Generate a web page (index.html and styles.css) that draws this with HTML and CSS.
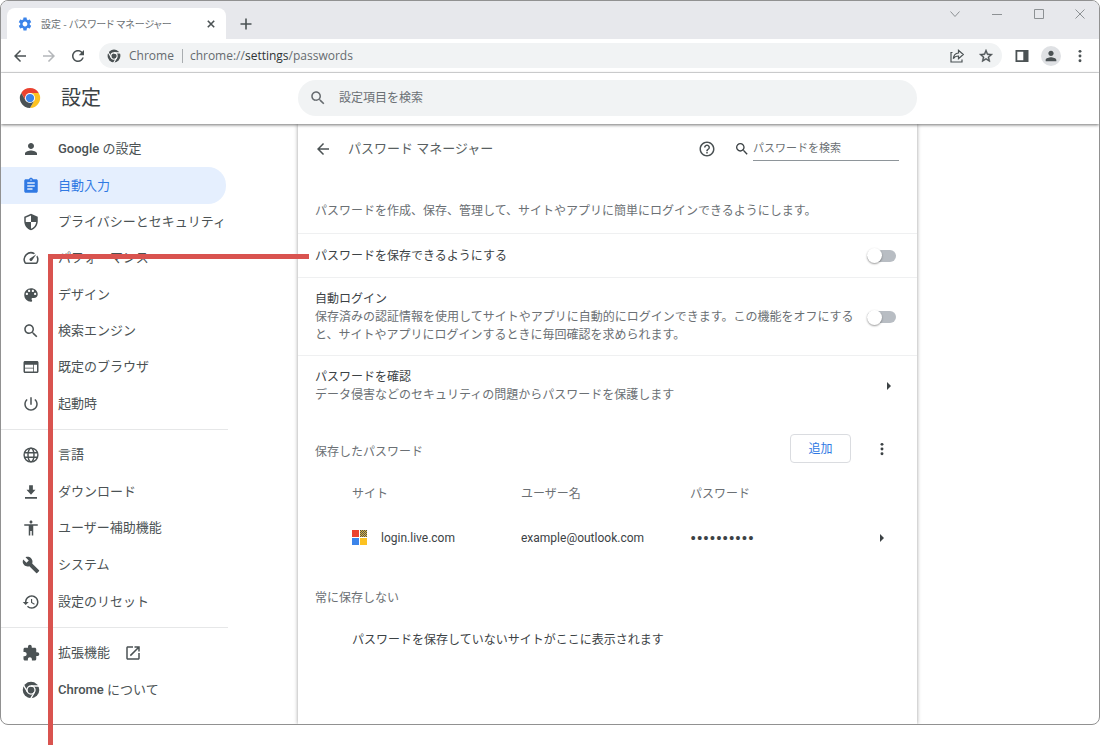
FILE: index.html
```html
<!DOCTYPE html>
<html lang="ja">
<head>
<meta charset="utf-8">
<title>設定 - パスワード マネージャー</title>
<link rel="stylesheet" href="styles.css">
</head>
<body>
<svg class="defs" aria-hidden="true">
  <symbol id="i-back" viewBox="0 0 24 24"><path d="M20 11H7.83l5.59-5.59L12 4l-8 8 8 8 1.41-1.41L7.83 13H20v-2z"/></symbol>
  <symbol id="i-search" viewBox="0 0 24 24"><path d="M15.5 14h-.79l-.28-.27C15.41 12.59 16 11.11 16 9.5 16 5.91 13.09 3 9.5 3S3 5.91 3 9.5 5.91 16 9.5 16c1.61 0 3.09-.59 4.23-1.57l.27.28v.79l5 4.99L20.49 19l-4.99-5zm-6 0C7.01 14 5 11.99 5 9.5S7.01 5 9.5 5 14 7.01 14 9.5 11.99 14 9.5 14z"/></symbol>
  <symbol id="i-person" viewBox="0 0 24 24"><path d="M12 12c2.21 0 4-1.79 4-4s-1.79-4-4-4-4 1.79-4 4 1.79 4 4 4zm0 2c-2.67 0-8 1.34-8 4v2h16v-2c0-2.66-5.33-4-8-4z"/></symbol>
  <symbol id="i-chrome" viewBox="0 0 24 24"><circle cx="12" cy="12" r="11"/><g fill="none" stroke="#fff" stroke-width="1.8"><circle cx="12" cy="12" r="5.4"/><path d="M12 6.6h11M16.7 14.7l-5.5 9.5M7.3 14.7L1.8 5.2"/></g></symbol>
  <symbol id="i-more" viewBox="0 0 24 24"><circle cx="12" cy="4" r="2.500"/><circle cx="12" cy="12" r="2.500"/><circle cx="12" cy="20" r="2.500"/></symbol>
</svg>

<div class="window">
  <div class="tabstrip">
    <div class="tab">
      <svg class="icon-16 blue" viewBox="0 0 24 24"><path d="M19.14 12.94c.04-.3.06-.61.06-.94 0-.32-.02-.64-.07-.94l2.03-1.58c.18-.14.23-.41.12-.61l-1.92-3.32c-.12-.22-.37-.29-.59-.22l-2.39.96c-.5-.38-1.03-.7-1.62-.94l-.36-2.54c-.04-.24-.24-.41-.48-.41h-3.84c-.24 0-.43.17-.47.41l-.36 2.54c-.59.24-1.13.57-1.62.94l-2.39-.96c-.22-.08-.47 0-.59.22L2.74 8.87c-.12.21-.08.47.12.61l2.03 1.58c-.05.3-.09.63-.09.94s.02.64.07.94l-2.03 1.58c-.18.14-.23.41-.12.61l1.92 3.32c.12.22.37.29.59.22l2.39-.96c.5.38 1.03.7 1.62.94l.36 2.54c.05.24.24.41.48.41h3.84c.24 0 .44-.17.47-.41l.36-2.54c.59-.24 1.13-.56 1.62-.94l2.39.96c.22.08.47 0 .59-.22l1.92-3.32c.12-.22.07-.47-.12-.61l-2.01-1.58zM12 15.6c-1.98 0-3.6-1.62-3.6-3.6s1.62-3.6 3.6-3.6 3.6 1.62 3.6 3.6-1.62 3.6-3.6 3.6z"/></svg>
      <span class="tab-title">設定 - パスワード マネージャー</span>
      <button class="tab-close" aria-label="タブを閉じる"><svg class="icon-8" viewBox="0 0 8 8"><path class="line" d="M.8.8l6.4 6.4M7.2.8L.8 7.2"/></svg></button>
    </div>
    <button class="new-tab" aria-label="新しいタブ"><svg class="icon-12" viewBox="0 0 12 12"><path class="line" d="M6 .5v11M.5 6h11"/></svg></button>
    <div class="win-controls">
      <button aria-label="タブを検索"><svg class="icon-12" viewBox="0 0 12 12"><path class="thin" d="M1.5 3.5L6 8.5l4.500-5"/></svg></button>
      <button aria-label="最小化"><svg class="icon-12" viewBox="0 0 12 12"><path class="thin" d="M1 6.500h10"/></svg></button>
      <button aria-label="最大化"><svg class="icon-12" viewBox="0 0 12 12"><path class="thin" d="M1.500 1.500h9v9h-9z"/></svg></button>
      <button aria-label="閉じる"><svg class="icon-12" viewBox="0 0 12 12"><path class="thin" d="M1.500 1.500l9 9M10.500 1.500l-9 9"/></svg></button>
    </div>
  </div>

  <div class="toolbar">
    <div class="nav-buttons">
      <button aria-label="戻る"><svg class="icon-18" viewBox="0 0 24 24"><use href="#i-back"/></svg></button>
      <button class="disabled" aria-label="進む" disabled><svg class="icon-18 flip" viewBox="0 0 24 24"><use href="#i-back"/></svg></button>
      <button aria-label="再読み込み"><svg class="icon-18" viewBox="0 0 24 24"><path d="M17.65 6.35C16.2 4.9 14.21 4 12 4c-4.42 0-7.99 3.58-7.99 8s3.57 8 7.99 8c3.73 0 6.84-2.55 7.73-6h-2.080c-.82 2.330-3.040 4-5.650 4-3.310 0-6-2.690-6-6s2.690-6 6-6c1.660 0 3.140.690 4.220 1.780L13 11h7V4l-2.350 2.350z"/></svg></button>
    </div>
    <div class="omnibox">
      <svg class="icon-14" viewBox="0 0 24 24"><use href="#i-chrome"/></svg>
      <span class="origin">Chrome</span>
      <span class="url">chrome://<b>settings</b>/passwords</span>
      <button aria-label="共有"><svg class="icon-16" viewBox="0 0 16 16"><path class="share" d="M3.500 4.500H2v9.500h11v-2.500M9.500 5V2.300L14.300 6.500 9.500 10.600V8C7.300 8 5.500 8.800 4.300 10.600 4.600 7.500 6.500 5.300 9.500 5z"/></svg></button>
      <button aria-label="ブックマーク"><svg class="icon-16" viewBox="0 0 24 24"><path stroke="currentColor" stroke-width=".6" d="M22 9.240l-7.190-.62L12 2 9.190 8.630 2 9.240l5.460 4.730L5.820 21 12 17.270 18.180 21l-1.630-7.030L22 9.240zM12 15.400l-3.760 2.270 1-4.280-3.320-2.880 4.380-.38L12 6.100l1.710 4.040 4.380.38-3.320 2.880 1 4.280L12 15.400z"/></svg></button>
    </div>
    <div class="tool-buttons">
      <button aria-label="サイドパネル"><svg class="icon-14" viewBox="0 0 14 14"><path fill-rule="evenodd" d="M.5 1h13v12h-13zM2.300 2.800v8.400h6V2.800z"/></svg></button>
      <button class="avatar" aria-label="プロフィール"><svg class="icon-16" viewBox="0 0 24 24"><use href="#i-person"/></svg></button>
      <button aria-label="メニュー"><svg class="icon-14" viewBox="0 0 24 24"><use href="#i-more"/></svg></button>
    </div>
  </div>

  <header class="page-header">
    <div class="brand">
      <svg class="icon-22" viewBox="0 0 24 24"><path fill="#ea4230" d="M2.470 6.500A11 11 0 0 1 21.530 6.500H12L7.240 14.750z"/><path fill="#fcc222" d="M21.530 6.500A11 11 0 0 1 12 23l4.760-8.250L12 6.500z"/><path fill="#4b5254" d="M12 23A11 11 0 0 1 2.470 6.500l4.770 8.250h9.520z"/><circle cx="12" cy="12" r="5.500" fill="#fff"/><circle cx="12" cy="12" r="4.500" fill="#3b84ea"/></svg>
      <h1>設定</h1>
    </div>
    <label class="search-pill">
      <svg class="icon-18" viewBox="0 0 24 24"><use href="#i-search"/></svg>
      <input type="search" placeholder="設定項目を検索" aria-label="設定項目を検索">
    </label>
  </header>

  <div class="content">
    <nav class="sidebar">
      <div class="group group-8">
        <a href="#"><svg class="icon-18" viewBox="0 0 24 24"><use href="#i-person"/></svg><span><b>Google</b> の設定</span></a>
        <a href="#" class="selected"><svg class="icon-18" viewBox="0 0 24 24"><path d="M19 3h-4.180C14.400 1.840 13.300 1 12 1c-1.300 0-2.400.840-2.820 2H5c-1.100 0-2 .9-2 2v14c0 1.100.9 2 2 2h14c1.100 0 2-.9 2-2V5c0-1.100-.9-2-2-2zm-7 0c.55 0 1 .45 1 1s-.45 1-1 1-1-.45-1-1 .45-1 1-1zm2 14H7v-2h7v2zm3-4H7v-2h10v2zm0-4H7V7h10v2z"/></svg><span>自動入力</span></a>
        <a href="#"><svg class="icon-18" viewBox="0 0 24 24"><path d="M12 1L3 5v6c0 5.550 3.840 10.740 9 12 5.160-1.260 9-6.450 9-12V5l-9-4zm0 10.990h7c-.53 4.120-3.280 7.790-7 8.940V12H5V6.300l7-3.110v8.800z"/></svg><span>プライバシーとセキュリティ</span></a>
        <a href="#"><svg class="icon-18" viewBox="0 0 24 24"><path d="M20.380 8.570l-1.230 1.850a8 8 0 0 1-.22 7.580H5.070A8 8 0 0 1 15.580 6.850l1.850-1.230A10 10 0 0 0 3.350 19a2 2 0 0 0 1.720 1h13.850a2 2 0 0 0 1.740-1 10 10 0 0 0-.27-10.440zm-9.790 6.840a2 2 0 0 0 2.830 0l5.660-8.490-8.490 5.660a2 2 0 0 0 0 2.830z"/></svg><span>パフォーマンス</span></a>
        <a href="#"><svg class="icon-18" viewBox="0 0 24 24"><path d="M12 3c-4.970 0-9 4.030-9 9s4.030 9 9 9c.83 0 1.500-.67 1.500-1.500 0-.39-.15-.74-.39-1.010-.23-.26-.38-.61-.38-.99 0-.83.67-1.500 1.500-1.500H16c2.760 0 5-2.240 5-5 0-4.420-4.030-8-9-8zm-5.500 9c-.83 0-1.500-.67-1.500-1.500S5.670 9 6.500 9 8 9.670 8 10.500 7.330 12 6.500 12zm3-4C8.670 8 8 7.330 8 6.500S8.670 5 9.500 5s1.500.67 1.500 1.500S10.330 8 9.500 8zm5 0c-.83 0-1.500-.67-1.500-1.500S13.670 5 14.500 5s1.500.67 1.500 1.500S15.330 8 14.500 8zm3 4c-.83 0-1.500-.67-1.500-1.500S16.670 9 17.500 9s1.500.67 1.500 1.500-.67 1.500-1.500 1.500z"/></svg><span>デザイン</span></a>
        <a href="#"><svg class="icon-18" viewBox="0 0 24 24"><use href="#i-search"/></svg><span>検索エンジン</span></a>
        <a href="#"><svg class="icon-18" viewBox="0 0 24 24"><path d="M20 4H4c-1.100 0-1.990.9-1.990 2L2 18c0 1.100.9 2 2 2h16c1.100 0 2-.9 2-2V6c0-1.100-.9-2-2-2zm-5 14H4v-4h11v4zm0-5H4V9h11v4zm5 5h-4V9h4v9z"/></svg><span>既定のブラウザ</span></a>
        <a href="#"><svg class="icon-18" viewBox="0 0 24 24"><path d="M13 3h-2v10h2V3zm4.830 2.170l-1.420 1.420C17.990 7.860 19 9.810 19 12c0 3.870-3.130 7-7 7s-7-3.130-7-7c0-2.190 1.010-4.140 2.580-5.420L6.170 5.170C4.230 6.820 3 9.260 3 12c0 4.970 4.030 9 9 9s9-4.030 9-9c0-2.740-1.230-5.180-3.170-6.830z"/></svg><span>起動時</span></a>
      </div>
      <hr>
      <div class="group group-5">
        <a href="#"><svg class="icon-18" viewBox="0 0 24 24"><g fill="none" stroke="currentColor" stroke-width="1.900"><circle cx="12" cy="12" r="9.200"/><ellipse cx="12" cy="12" rx="4" ry="9.200"/><path d="M3.500 9h17M3.500 15h17"/></g></svg><span>言語</span></a>
        <a href="#"><svg class="icon-18" viewBox="0 0 24 24"><path d="M18 9h-3.500V3h-5v6H6l6 6.500zM4 18.500V21h16v-2.500z"/></svg><span>ダウンロード</span></a>
        <a href="#"><svg class="icon-18" viewBox="0 0 24 24"><path d="M12 2c1.100 0 2 .9 2 2s-.9 2-2 2-2-.9-2-2 .9-2 2-2zm9 7h-6v13h-2v-6h-2v6H9V9H3V7h18v2z"/></svg><span>ユーザー補助機能</span></a>
        <a href="#"><svg class="icon-18" viewBox="0 0 24 24"><path d="M22.700 19l-9.100-9.100c.9-2.300.4-5-1.500-6.900-2-2-5-2.400-7.400-1.300L9 6 6 9 1.600 4.700C.4 7.100.9 10.100 2.900 12.100c1.900 1.900 4.600 2.400 6.900 1.500l9.100 9.100c.4.4 1 .4 1.400 0l2.300-2.300c.5-.4.5-1.100.1-1.400z"/></svg><span>システム</span></a>
        <a href="#"><svg class="icon-18" viewBox="0 0 24 24"><path d="M13 3c-4.970 0-9 4.030-9 9H1l3.890 3.890.07.14L9 12H6c0-3.870 3.130-7 7-7s7 3.130 7 7-3.130 7-7 7c-1.930 0-3.680-.79-4.940-2.060l-1.420 1.420C8.270 19.990 10.510 21 13 21c4.970 0 9-4.030 9-9s-4.030-9-9-9zm-1 5v5l4.280 2.540.72-1.210-3.500-2.080V8H12z"/></svg><span>設定のリセット</span></a>
      </div>
      <hr>
      <div class="group group-2">
        <a href="#"><svg class="icon-18" viewBox="0 0 24 24"><path d="M20.500 11H19V7c0-1.100-.9-2-2-2h-4V3.500C13 2.120 11.880 1 10.500 1S8 2.120 8 3.500V5H4c-1.100 0-1.990.9-1.990 2v3.800H3.500c1.490 0 2.700 1.210 2.700 2.700s-1.210 2.700-2.700 2.700H2V20c0 1.100.9 2 2 2h3.800v-1.500c0-1.490 1.210-2.700 2.700-2.700 1.490 0 2.700 1.210 2.700 2.700V22H17c1.100 0 2-.9 2-2v-4h1.500c1.380 0 2.500-1.120 2.500-2.500S21.880 11 20.500 11z"/></svg><span>拡張機能</span><svg class="icon-18 external" viewBox="0 0 24 24"><path d="M19 19H5V5h7V3H5c-1.110 0-2 .9-2 2v14c0 1.100.89 2 2 2h14c1.100 0 2-.9 2-2v-7h-2v7zM14 3v2h3.590l-9.830 9.830 1.410 1.410L19 6.410V10h2V3h-7z"/></svg></a>
        <a href="#"><svg class="icon-18" viewBox="0 0 24 24"><use href="#i-chrome"/></svg><span><b>Chrome</b> について</span></a>
      </div>
    </nav>

    <main class="card">
      <div class="card-head">
        <button aria-label="戻る"><svg class="icon-18" viewBox="0 0 24 24"><use href="#i-back"/></svg></button>
        <h2>パスワード マネージャー</h2>
        <button aria-label="ヘルプ"><svg class="icon-18" viewBox="0 0 24 24"><path d="M11 18h2v-2h-2v2zm1-16C6.480 2 2 6.480 2 12s4.480 10 10 10 10-4.480 10-10S17.520 2 12 2zm0 18c-4.410 0-8-3.590-8-8s3.590-8 8-8 8 3.590 8 8-3.590 8-8 8zm0-14c-2.210 0-4 1.790-4 4h2c0-1.100.9-2 2-2s2 .9 2 2c0 2-3 1.750-3 5h2c0-2.250 3-2.500 3-5 0-2.210-1.790-4-4-4z"/></svg></button>
        <label class="find">
          <svg class="icon-16" viewBox="0 0 24 24"><use href="#i-search"/></svg>
          <input type="search" placeholder="パスワードを検索" aria-label="パスワードを検索">
        </label>
      </div>
      <p class="intro">パスワードを作成、保存、管理して、サイトやアプリに簡単にログインできるようにします。</p>

      <div class="row">
        <label class="row-text" for="save-toggle"><span class="row-title">パスワードを保存できるようにする</span></label>
        <input class="toggle" type="checkbox" id="save-toggle">
      </div>
      <div class="row tall">
        <label class="row-text" for="login-toggle"><span class="row-title">自動ログイン</span><span class="row-sub">保存済みの認証情報を使用してサイトやアプリに自動的にログインできます。この機能をオフにすると、サイトやアプリにログインするときに毎回確認を求められます。</span></label>
        <input class="toggle" type="checkbox" id="login-toggle">
      </div>
      <div class="row tall">
        <div class="row-text"><span class="row-title">パスワードを確認</span><span class="row-sub">データ侵害などのセキュリティの問題からパスワードを保護します</span></div>
        <button class="arrow" aria-label="パスワードを確認"><svg class="icon-8" viewBox="0 0 8 8"><path d="M2 0l4 4-4 4z"/></svg></button>
      </div>

      <div class="section-head">
        <h3>保存したパスワード</h3>
        <button class="add">追加</button>
        <button class="more" aria-label="その他の操作"><svg class="icon-14" viewBox="0 0 24 24"><use href="#i-more"/></svg></button>
      </div>
      <table class="passwords">
        <thead>
          <tr><th>サイト</th><th>ユーザー名</th><th>パスワード</th><td></td></tr>
        </thead>
        <tbody>
          <tr>
            <td><span class="site"><svg class="icon-16" viewBox="0 0 16 16"><defs><pattern id="mesh" width="2" height="2" patternUnits="userSpaceOnUse"><path fill="#e2b53a" d="M0 0h2v2H0z"/><path fill="#4b5254" d="M0 0h1v1H0zM1 1h1v1H1z"/></pattern></defs><path fill="#ea4230" d="M0 0h7v7H0z"/><path fill="url(#mesh)" d="M8 0h7v7H8z"/><path fill="#3b84ea" d="M0 8h7v7H0z"/><path fill="#fcc222" d="M8 8h7v7H8z"/></svg>login.live.com</span></td>
            <td>example@outlook.com</td>
            <td><input class="secret" type="password" value="0000000000" readonly aria-label="パスワード"></td>
            <td><button class="arrow" aria-label="パスワードの詳細"><svg class="icon-8" viewBox="0 0 8 8"><path d="M2 0l4 4-4 4z"/></svg></button></td>
          </tr>
        </tbody>
      </table>

      <h3 class="never">常に保存しない</h3>
      <p class="empty">パスワードを保存していないサイトがここに表示されます</p>
    </main>
  </div>
</div>
<div class="callout" aria-hidden="true"></div>
</body>
</html>
```

FILE: styles.css
```css
* {
  box-sizing: border-box;
}

body {
  position: relative;
  min-height: 100vh;
  margin: 0;
  padding-bottom: 20px;
  background: #fff;
  color: #3c4245;
  font-family: Roboto, "Noto Sans CJK JP", sans-serif;
  font-size: 12px;
  line-height: 18px;
}

h1,
h2,
h3,
p {
  margin: 0;
  font-weight: 400;
}

h3 {
  font-size: 12px;
}

button {
  display: flex;
  align-items: center;
  justify-content: center;
  padding: 0;
  border: 0;
  background: none;
  color: inherit;
  font: inherit;
}

input {
  min-width: 0;
  margin: 0;
  padding: 0;
  border: 0;
  outline: 0;
  background: none;
  color: inherit;
  font: inherit;
}

input::placeholder {
  color: #6b7074;
  opacity: 1;
}

svg {
  flex: none;
  display: block;
  fill: currentColor;
}

.defs {
  position: absolute;
  width: 0;
  height: 0;
}

.icon-8 { width: 8px; height: 8px; }
.icon-12 { width: 12px; height: 12px; }
.icon-14 { width: 14px; height: 14px; }
.icon-16 { width: 16px; height: 16px; }
.icon-18 { width: 18px; height: 18px; }
.icon-22 { width: 22px; height: 22px; }

.blue { color: #3b84ea; }
.flip { transform: scaleX(-1); }

.line,
.thin,
.share {
  fill: none;
  stroke: currentColor;
}

.line { stroke-width: 1.6; }
.thin { stroke-width: 1; }
.share { stroke-width: 1.2; }

/* Window frame */

.window {
  display: flex;
  flex-direction: column;
  min-height: calc(100vh - 20px);
  border: 1px solid #919191;
  border-radius: 8px;
  overflow: hidden;
}

.tabstrip {
  display: flex;
  align-items: flex-start;
  height: 38px;
  padding-left: 6px;
  background: #e7e8ec;
}

.tab {
  display: flex;
  align-items: center;
  gap: 8px;
  width: 219px;
  height: 31px;
  margin-top: 7px;
  padding: 0 9px 0 10px;
  border-radius: 8px 8px 0 0;
  background: #fff;
}

.tab-title {
  flex: 1;
  color: #6b7074;
  font-family: "Noto Sans CJK JP", sans-serif;
  font-size: 10px;
  font-feature-settings: "palt";
  white-space: nowrap;
}

.tab-close {
  width: 12px;
  height: 16px;
  color: #4b5254;
}

.new-tab {
  width: 24px;
  height: 24px;
  margin: 11px 0 0 8px;
  color: #4b5254;
}

.win-controls {
  display: flex;
  margin-left: auto;
  color: #8d9194;
}

.win-controls button {
  width: 42px;
  height: 26px;
}

.win-controls button:last-child {
  width: 39px;
}

.toolbar {
  display: flex;
  align-items: center;
  height: 34px;
  border-bottom: 1px solid #dedfe1;
  color: #4b5254;
}

.nav-buttons {
  display: flex;
  gap: 11px;
  padding: 0 12px 0 10px;
}

.disabled { color: #b4b7ba; }

.omnibox {
  flex: 1;
  display: flex;
  align-items: center;
  height: 25px;
  padding: 0 8px;
  border-radius: 13px;
  background: #f1f3f4;
  color: #666b6f;
  font-family: "Open Sans", "Noto Sans CJK JP", sans-serif;
}

.omnibox .icon-14 {
  color: #4b5254;
}

.omnibox .origin {
  padding: 0 8px;
  border-right: 1px solid #a9adb0;
  line-height: 14px;
}

.omnibox .url {
  flex: 1;
  padding-left: 7px;
}

.omnibox b {
  color: #2f3335;
  font-weight: 400;
}

.omnibox button {
  margin-left: 13px;
  color: #4b5254;
}

.tool-buttons {
  display: flex;
  align-items: center;
  padding: 0 12px 0 13px;
  gap: 12px;
}

.avatar {
  width: 20px;
  height: 20px;
  border-radius: 50%;
  background: #dfe1e4;
}

/* Settings header */

.page-header,
.content {
  display: grid;
  grid-template-columns: 297px minmax(0, 619px) minmax(0, 1fr);
}

.page-header {
  position: relative;
  align-items: center;
  padding: 7px 0 8px;
  background: #fff;
  box-shadow: 0 1px 3px rgba(0, 0, 0, 0.55);
}

.brand {
  display: flex;
  align-items: center;
  gap: 20px;
  padding-left: 18px;
}

.brand h1 {
  font-size: 20px;
  line-height: 28px;
}

.search-pill {
  display: flex;
  align-items: center;
  gap: 12px;
  height: 36px;
  padding: 0 11px;
  border-radius: 18px;
  background: #f1f3f4;
  color: #666b6f;
}

.search-pill input {
  flex: 1;
}

/* Sidebar */

.content {
  flex: 1;
}

.sidebar {
  padding-top: 7px;
}

.sidebar hr {
  width: 227px;
  height: 1px;
  margin: 7px 0;
  border: 0;
  background: #e6e7e8;
}

.group {
  display: grid;
  width: 225px;
  font-size: 13px;
}

.group-8 { min-height: 291px; }
.group-5 { min-height: 183px; }
.group-2 { min-height: 73px; }

.group a {
  display: flex;
  align-items: center;
  gap: 18px;
  padding-left: 21px;
  border-radius: 0 18px 18px 0;
  color: #4b5254;
  text-decoration: none;
  white-space: nowrap;
}

.group b {
  font-weight: 500;
}

.group .external {
  margin-left: -4px;
}

.group a.selected {
  background: #e5effe;
  color: #3079e3;
}

/* Password manager card */

.card {
  box-shadow: 0 0 4px rgba(0, 0, 0, 0.4);
}

.card-head {
  display: flex;
  align-items: center;
  height: 50px;
  padding: 0 18px 0 16px;
}

.card-head button {
  color: #4b5254;
}

.card-head h2 {
  flex: 1;
  padding-left: 16px;
  color: #595f62;
  font-size: 13px;
}

.find {
  display: flex;
  align-items: center;
  gap: 3px;
  margin-left: 18px;
}

.find input {
  width: 146px;
  height: 23px;
  border-bottom: 1px solid #8e959a;
  font-size: 11px;
}

.intro {
  padding: 28px 17px 13px;
  color: #6b7074;
}

.row {
  display: flex;
  align-items: center;
  justify-content: space-between;
  gap: 8px;
  min-height: 44px;
  padding: 10px 21px 10px 17px;
  border-top: 1px solid #eff0f1;
}

.row-title,
.row-sub {
  display: block;
}

.row-sub,
.section-head h3,
.never,
.passwords th {
  color: #6b7074;
}

.row.tall {
  padding-top: 12px;
  padding-bottom: 11px;
}

.toggle {
  appearance: none;
  flex: none;
  display: flex;
  align-items: center;
  width: 29px;
  height: 12px;
  border-radius: 6px;
  background: #b8bdc3;
}

.toggle::before {
  content: "";
  width: 15px;
  height: 15px;
  border-radius: 50%;
  background: #fff;
  box-shadow: 0 1px 2px rgba(0, 0, 0, 0.4);
}

.arrow {
  width: 14px;
  height: 14px;
}

.section-head {
  display: flex;
  align-items: center;
  padding: 19px 28px 0 17px;
}

.section-head h3 {
  flex: 1;
  padding-top: 6px;
}

.add {
  width: 61px;
  height: 29px;
  border: 1px solid #dadce0;
  border-radius: 4px;
  color: #3079e3;
}

.more {
  margin-left: 24px;
}

.passwords {
  width: 100%;
  margin-top: 13px;
  padding-left: 54px;
  padding-right: 28px;
  border-collapse: separate;
  border-spacing: 0;
  table-layout: fixed;
}

.passwords th,
.passwords td {
  height: 36px;
  padding: 0;
  font-weight: 400;
  text-align: left;
}

.passwords tbody td {
  height: 52px;
}

.passwords th:last-of-type,
.passwords td:nth-child(3) {
  width: 185px;
}

.passwords td:last-child {
  width: 14px;
}

.site {
  display: flex;
  align-items: center;
  gap: 13px;
}

.secret {
  display: block;
  width: 100px;
  font-size: 19px;
}

.never {
  padding: 25px 17px 0;
}

.empty {
  padding: 24px 54px;
}

/* Red leader line drawn across the window */

.callout {
  position: absolute;
  top: 254px;
  bottom: 0;
  left: 48px;
  width: 261px;
  border-top: 5px solid #d9534f;
  border-left: 5px solid #d9534f;
  pointer-events: none;
}
```
